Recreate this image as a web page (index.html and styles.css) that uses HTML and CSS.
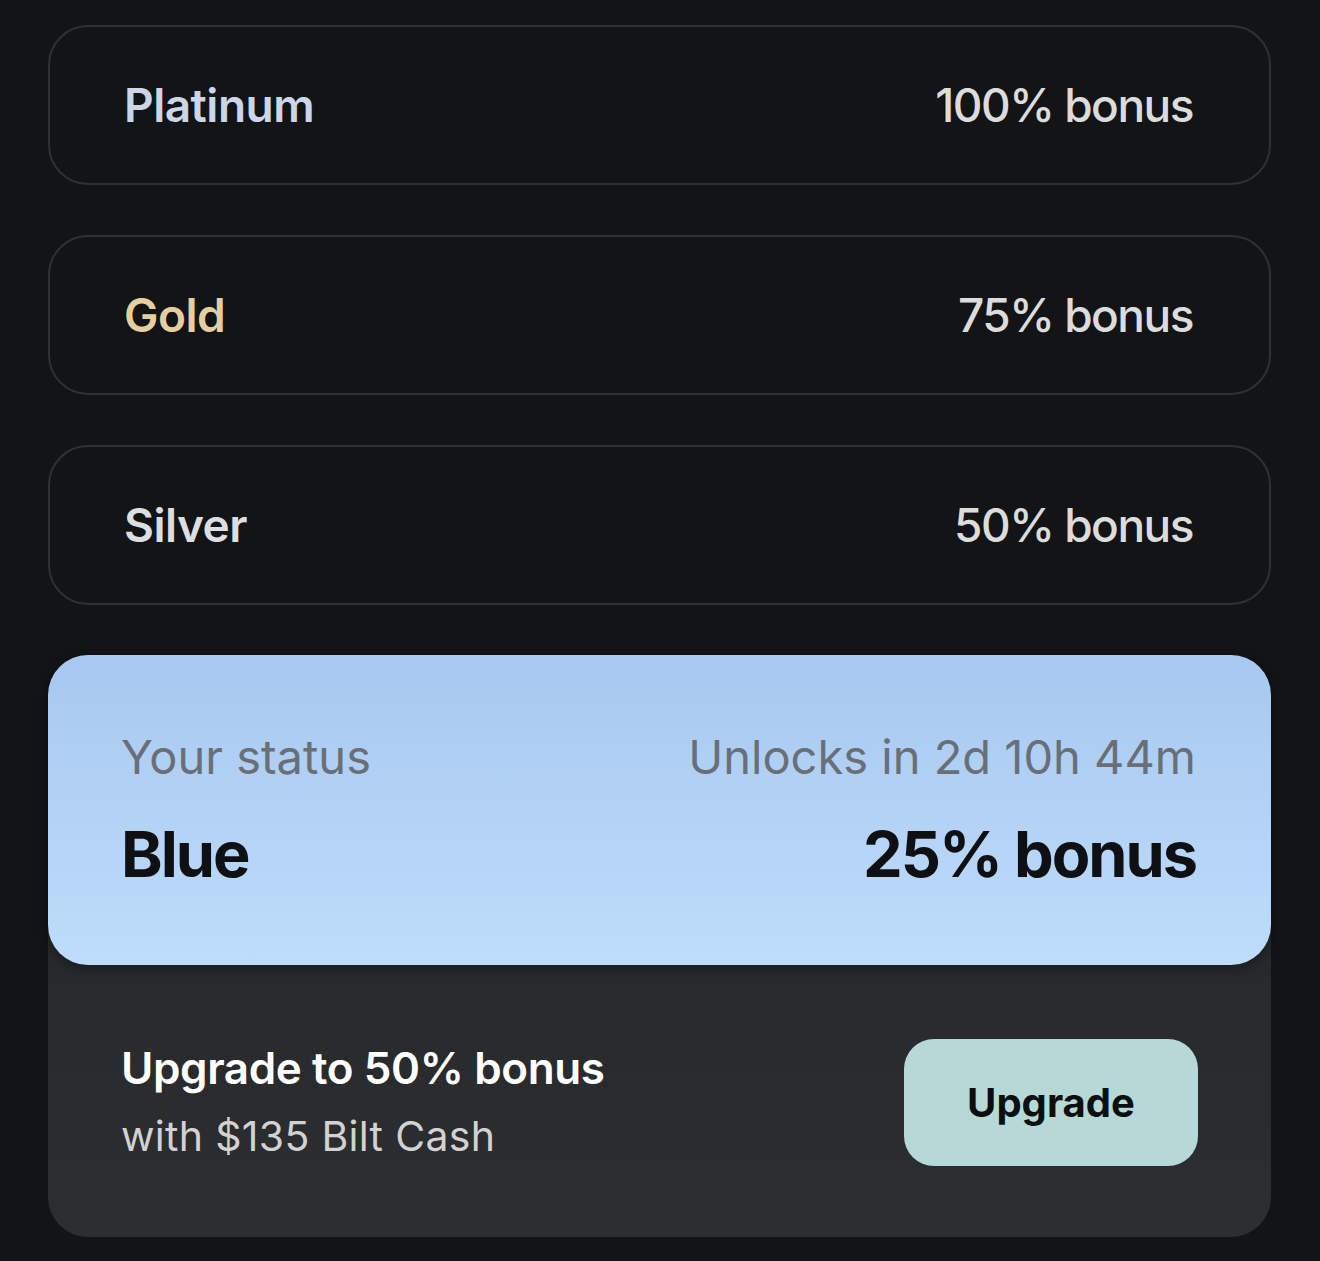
FILE: index.html
```html
<!DOCTYPE html>
<html lang="en">
<head>
  <meta charset="UTF-8" />
  <meta name="viewport" content="width=device-width, initial-scale=1.0"/>
  <title>Status tiers</title>
  <link rel="stylesheet" href="styles.css">
</head>
<body>

  <section class="tiers">
    <!-- Platinum -->
    <div class="tier">
      <span class="tier-name platinum">Platinum</span>
      <span class="tier-bonus">100% bonus</span>
    </div>

    <!-- Gold -->
    <div class="tier">
      <span class="tier-name gold">Gold</span>
      <span class="tier-bonus">75% bonus</span>
    </div>

    <!-- Silver -->
    <div class="tier">
      <span class="tier-name silver">Silver</span>
      <span class="tier-bonus">50% bonus</span>
    </div>

    <!-- Current status -->
    <div class="status">
      <div class="status-card">
        <div class="status-row">
          <span class="status-label">Your status</span>
          <span class="status-label">Unlocks in 2d 10h 44m</span>
        </div>
        <div class="status-row">
          <span class="status-value">Blue</span>
          <span class="status-value">25% bonus</span>
        </div>
      </div>
      <div class="upgrade">
        <div class="upgrade-text">
          <div class="upgrade-title">Upgrade to 50% bonus</div>
          <div class="upgrade-sub">with $135 Bilt Cash</div>
        </div>
        <button class="upgrade-btn">Upgrade</button>
      </div>
    </div>
  </section>

</body>
</html>
```

FILE: styles.css
```css
body {
  font-family: Inter, "Noto Sans", sans-serif;
  background-color: #121416;
  margin: 0;
  padding: 25px 49px 24px 48px;
}
.tiers {
  display: flex;
  flex-direction: column;
  gap: 50px;
}
.tier {
  height: 156px;
  border: 2px solid #2f3134;
  border-radius: 40px;
  display: flex;
  align-items: center;
  justify-content: space-between;
  padding: 0 76px 0 74px;
}
.tier-name {
  font-size: 46px;
  font-weight: 600;
  letter-spacing: -0.5px;
}
.platinum {
  color: #ccd6e6;
}
.gold {
  color: #e5cf9f;
}
.silver {
  color: #dcdee1;
}
.tier-bonus {
  font-size: 46px;
  font-weight: 500;
  color: #dcdcdc;
  letter-spacing: -1.5px;
}

/* Status block */
.status {
  background: linear-gradient(#222426, #2c2e30);
  border-radius: 40px;
}
.status-card {
  height: 310px;
  box-sizing: border-box;
  padding: 74px 75px 0 73px;
  border-radius: 40px;
  background: linear-gradient(#a7c8ef, #bedcfb);
  box-shadow: 0 4px 14px rgba(0, 0, 0, 0.35);
  display: flex;
  flex-direction: column;
  gap: 32px;
}
.status-row {
  display: flex;
  justify-content: space-between;
  align-items: center;
}
.status-label {
  font-size: 47px;
  color: #6a6f77;
  line-height: 1.2;
}
.status-value {
  font-size: 63px;
  font-weight: 700;
  color: #0e1013;
  line-height: 1.2;
  letter-spacing: -2px;
}
.upgrade {
  height: 272px;
  display: flex;
  align-items: center;
  justify-content: space-between;
  padding: 0 73px;
}
.upgrade-title {
  font-size: 44px;
  font-weight: 600;
  color: #ffffff;
  letter-spacing: -0.4px;
}
.upgrade-sub {
  font-size: 41px;
  color: #d2d2d2;
  margin-top: 16px;
  letter-spacing: 0.3px;
}
.upgrade-btn {
  width: 294px;
  height: 127px;
  margin-top: 2px;
  border: none;
  border-radius: 30px;
  background-color: #b6d8d6;
  color: #0c0f10;
  font-family: inherit;
  font-size: 40px;
  font-weight: 700;
  cursor: pointer;
}
```
